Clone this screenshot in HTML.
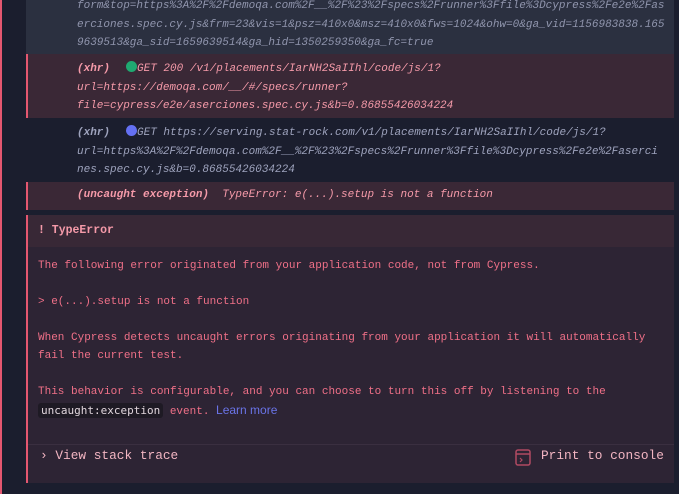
<!DOCTYPE html>
<html><head><meta charset="utf-8"><style>
*{margin:0;padding:0;box-sizing:border-box}
body{width:679px;height:494px;background:#1b1e2e;position:relative;overflow:hidden;font-family:"Liberation Mono",monospace}
.edge{position:absolute;left:0;top:0;width:2px;height:494px;background:#e45770}
.row{position:absolute;left:26px;width:648px;padding-left:51px;font-size:11px;font-style:italic;line-height:18.5px;white-space:pre}
.r1{top:0;height:54px;background:#2b3040;color:#9095ad}
.r2{top:54px;height:64px;background:#3a2836;color:#f59aa9;border-left:2px solid #e45770;padding-left:49px;padding-top:5px}
.r3{top:118px;height:64px;color:#9ea3bd;padding-top:5px}
.r4{top:182px;height:28px;background:#3a2836;color:#f59aa9;border-left:2px solid #e45770;padding-left:49px;padding-top:4px}
.dot{display:inline-block;width:11px;height:11px;border-radius:50%;vertical-align:-1px;margin-left:16px}
.err{position:absolute;left:26px;top:215px;width:648px;height:268px;background:#2d2434;border-left:2px solid #e45770;color:#f07088;font-size:11px}
.hd{height:32px;background:#382836;padding:9px 0 0 10px;color:#f59aa9;font-weight:bold;font-size:11.5px}
.err p{position:absolute;left:10px;white-space:pre;line-height:18px}
code{background:#1e1a24;color:#e0d5dc;padding:1px 3px;border-radius:3px}
.link{color:#6a74e8;font-family:"Liberation Sans",sans-serif;font-size:12px}
.sep{position:absolute;left:0;right:0;top:229px;height:1px;background:#3a2f40}
.foot{position:absolute;top:233px;font-size:12.8px;color:#f2b5c2}
</style></head><body>
<div class="edge"></div>
<div class="row r1" style="top:-4px;height:58px;padding-top:1px">form&amp;top=https%3A%2F%2Fdemoqa.com%2F__%2F%23%2Fspecs%2Frunner%3Ffile%3Dcypress%2Fe2e%2Fas
erciones.spec.cy.js&amp;frm=23&amp;vis=1&amp;psz=410x0&amp;msz=410x0&amp;fws=1024&amp;ohw=0&amp;ga_vid=1156983838.165
9639513&amp;ga_sid=1659639514&amp;ga_hid=1350259350&amp;ga_fc=true</div>
<div class="row r2" style="padding-top:6px"><b>(xhr)</b><span class="dot" style="background:#1fa971"></span>GET 200 /v1/placements/IarNH2SaIIhl/code/js/1?
url=https://demoqa.com/__/#/specs/runner?
file=cypress/e2e/aserciones.spec.cy.js&amp;b=0.86855426034224</div>
<div class="row r3" style="padding-top:6px"><b>(xhr)</b><span class="dot" style="background:#6470f3"></span>GET https://serving.stat-rock.com/v1/placements/IarNH2SaIIhl/code/js/1?
url=https%3A%2F%2Fdemoqa.com%2F__%2F%23%2Fspecs%2Frunner%3Ffile%3Dcypress%2Fe2e%2Faserci
nes.spec.cy.js&amp;b=0.86855426034224</div>
<div class="row r4" style="padding-top:4px"><b>(uncaught exception)</b>  TypeError: e(...).setup is not a function</div>
<div class="err">
<div class="hd">!  TypeError</div>
<p style="top:42px">The following error originated from your application code, not from Cypress.</p>
<p style="top:78px">&gt; e(...).setup is not a function</p>
<p style="top:114px">When Cypress detects uncaught errors originating from your application it will automatically
fail the current test.</p>
<p style="top:168px">This behavior is configurable, and you can choose to turn this off by listening to the
<code>uncaught:exception</code> event. <span class="link">Learn more</span></p>
<div class="sep"></div>
<div class="foot" style="left:12px">›&nbsp;View stack trace</div>
<svg style="position:absolute;left:487px;top:234px" width="16" height="17" viewBox="0 0 16 17"><rect x="1" y="1" width="14" height="15" rx="2" fill="none" stroke="#b04a62" stroke-width="1.5"/><line x1="1" y1="5" x2="15" y2="5" stroke="#b04a62" stroke-width="1.5"/><path d="M5 9l2 2-2 2" fill="none" stroke="#b04a62" stroke-width="1.2"/></svg>
<div class="foot" style="left:513px">Print to console</div>
</div>
</body></html>
